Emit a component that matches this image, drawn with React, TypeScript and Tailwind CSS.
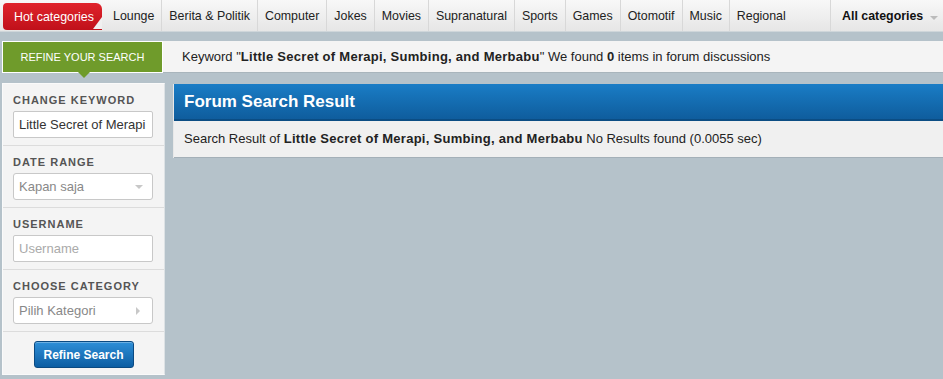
const categories = [
  "Lounge",
  "Berita & Politik",
  "Computer",
  "Jokes",
  "Movies",
  "Supranatural",
  "Sports",
  "Games",
  "Otomotif",
  "Music",
  "Regional",
];

function FieldLabel({ children }: { children: React.ReactNode }) {
  return (
    <div className="text-[11px] font-bold tracking-[1px] text-[#555] leading-[14px] mb-[4px]">
      {children}
    </div>
  );
}

export default function App() {
  return (
    <div className="w-[943px] h-[379px] overflow-hidden bg-[#b5c2ca] font-['Liberation_Sans',Arial,sans-serif] text-[13px] text-[#222]">
      {/* top nav */}
      <div className="h-[32px] flex items-stretch bg-gradient-to-b from-[#f8f8f8] to-[#e6e6e6] border-b border-[#cfd6da] text-[12.4px]">
        <div className="relative shrink-0 whitespace-nowrap ml-[3px] mt-[3px] mb-[1px] w-[99px] pl-[11px] pt-[1px] flex items-center rounded-l-[4px] rounded-tr-[6px] bg-gradient-to-b from-[#e0232b] to-[#c0101a] text-white">
          Hot categories
          <span className="absolute right-0 top-[14px] w-0 h-0 border-l-[9px] border-l-transparent border-b-[12px] border-b-[#f0f0f0]" />
        </div>
        <div className="flex ml-[4px] shrink-0">
          {categories.map((c) => (
            <div
              key={c}
              className="px-[7px] pt-[2px] flex items-center border-r border-[#d8d8d8] last:border-r-0 whitespace-nowrap"
            >
              {c}
            </div>
          ))}
        </div>
        <div className="ml-auto shrink-0 whitespace-nowrap w-[113px] border-l border-[#d8d8d8] flex items-center pl-[11px] pt-[2px] font-bold text-[#111]">
          All categories
          <span className="ml-[7px] mt-[2px] w-0 h-0 border-x-[4px] border-x-transparent border-t-[4px] border-t-[#bbb]" />
        </div>
      </div>

      {/* keyword bar */}
      <div className="mt-[9px] ml-[2px] h-[32px] flex">
        <div className="relative w-[161px] bg-[#6f9b2b] border border-white flex items-center justify-center text-[11px] text-white">
          REFINE YOUR SEARCH
          <span className="absolute left-[75px] -bottom-[6px] w-0 h-0 border-x-[6px] border-x-transparent border-t-[6px] border-t-[#6f9b2b]" />
        </div>
        <div className="flex-1 bg-[#f4f4f4] border-b border-[#a9b5bc] flex items-center pl-[19px] whitespace-nowrap">
          Keyword "<b className="tracking-[0.27px]">Little Secret of Merapi, Sumbing, and Merbabu</b>" We found&nbsp;<b>0</b>&nbsp;items in forum discussions
        </div>
      </div>

      <div className="mt-[10px] ml-[2px] flex gap-[8px] items-start">
        {/* sidebar */}
        <div className="w-[163px] h-[292px] bg-[#f4f4f4] border border-[#fafafa] border-r-[#dde2e5]">
          <div className="px-[10px] pt-[9px] pb-[7px] border-b border-[#dcdcdc]">
            <FieldLabel>CHANGE KEYWORD</FieldLabel>
            <div className="w-[140px] h-[27px] bg-white border border-[#c8c8c8] rounded-[2px] flex items-center pl-[5px] text-[#333] whitespace-nowrap overflow-hidden">
              Little Secret of Merapi
            </div>
          </div>
          <div className="px-[10px] pt-[9px] pb-[7px] border-b border-[#dcdcdc]">
            <FieldLabel>DATE RANGE</FieldLabel>
            <div className="w-[140px] h-[27px] bg-white border border-[#c8c8c8] rounded-[3px] flex items-center justify-between pl-[5px] pr-[9px] text-[#888]">
              Kapan saja
              <span className="w-0 h-0 border-x-[4px] border-x-transparent border-t-[4px] border-t-[#c8c8c8]" />
            </div>
          </div>
          <div className="px-[10px] pt-[9px] pb-[7px] border-b border-[#dcdcdc]">
            <FieldLabel>USERNAME</FieldLabel>
            <div className="w-[140px] h-[27px] bg-white border border-[#c8c8c8] rounded-[2px] flex items-center pl-[5px] text-[#aaa]">
              Username
            </div>
          </div>
          <div className="px-[10px] pt-[9px] pb-[7px] border-b border-[#dcdcdc]">
            <FieldLabel>CHOOSE CATEGORY</FieldLabel>
            <div className="w-[140px] h-[27px] bg-white border border-[#c8c8c8] rounded-[3px] flex items-center justify-between pl-[5px] pr-[12px] text-[#888]">
              Pilih Kategori
              <span className="w-0 h-0 border-y-[4px] border-y-transparent border-l-[4px] border-l-[#c8c8c8]" />
            </div>
          </div>
          <div className="flex justify-center pt-[9px]">
            <button className="w-[100px] h-[27px] rounded-[3px] border border-[#0a4a82] bg-gradient-to-b from-[#2d8fd8] to-[#0c5ea3] text-white font-bold text-[12px] shadow-[inset_0_1px_0_rgba(255,255,255,0.3)]">
              Refine Search
            </button>
          </div>
        </div>

        {/* main panel */}
        <div className="flex-1 mt-[1px] border-l border-[#e8e8e8]">
          <div className="h-[37px] bg-gradient-to-b from-[#1a7dc6] to-[#0f5d9d] border-b-2 border-[#0b4d84] flex items-center pl-[10px] text-white text-[17px] font-bold">
            Forum Search Result
          </div>
          <div className="h-[37px] bg-[#f0f0f0] border-b border-[#a4b0b8] flex items-center pl-[10px] whitespace-nowrap">
            Search Result of&nbsp;<b className="tracking-[0.27px]">Little Secret of Merapi, Sumbing, and Merbabu</b>&nbsp;No Results found (0.0055 sec)
          </div>
        </div>
      </div>
    </div>
  );
}
